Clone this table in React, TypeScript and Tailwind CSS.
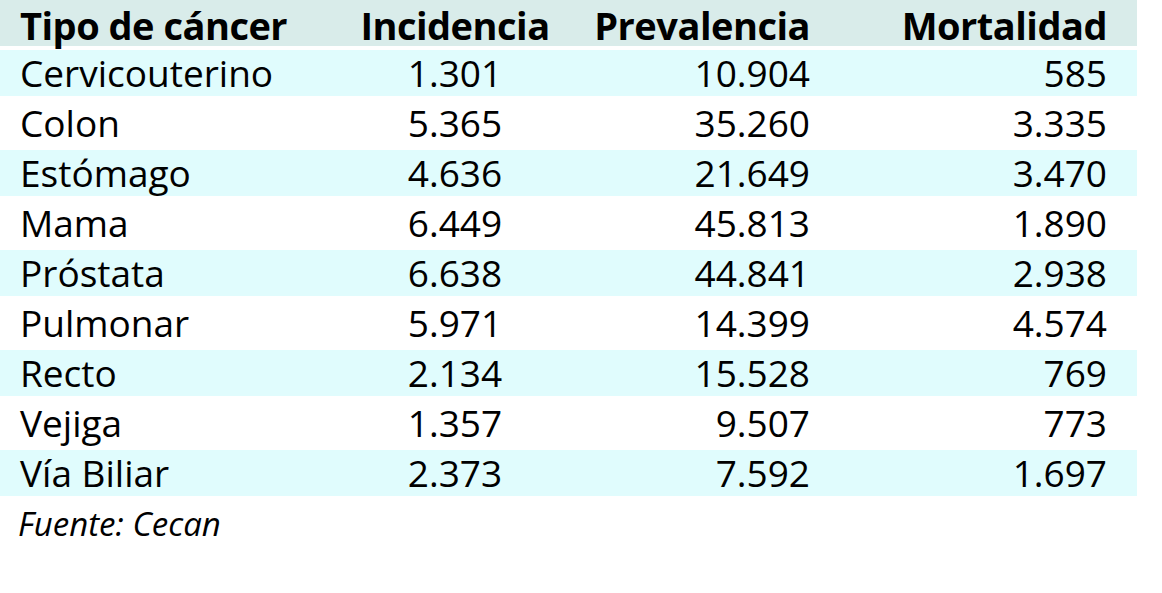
import React from "react";

const rows = [
  { tipo: "Cervicouterino", incidencia: "1.301", prevalencia: "10.904", mortalidad: "585" },
  { tipo: "Colon", incidencia: "5.365", prevalencia: "35.260", mortalidad: "3.335" },
  { tipo: "Estómago", incidencia: "4.636", prevalencia: "21.649", mortalidad: "3.470" },
  { tipo: "Mama", incidencia: "6.449", prevalencia: "45.813", mortalidad: "1.890" },
  { tipo: "Próstata", incidencia: "6.638", prevalencia: "44.841", mortalidad: "2.938" },
  { tipo: "Pulmonar", incidencia: "5.971", prevalencia: "14.399", mortalidad: "4.574" },
  { tipo: "Recto", incidencia: "2.134", prevalencia: "15.528", mortalidad: "769" },
  { tipo: "Vejiga", incidencia: "1.357", prevalencia: "9.507", mortalidad: "773" },
  { tipo: "Vía Biliar", incidencia: "2.373", prevalencia: "7.592", mortalidad: "1.697" },
];

const cols = "grid grid-cols-[320px_230px_240px_297px] items-center pl-[20px] pr-[30px]";

const App = () => {
  return (
    <div className="w-[1162px] h-[593px] bg-white text-black font-['Open_Sans',sans-serif]">
      <div className="w-[1137px] flex flex-col gap-1">
        {/* Header */}
        <div className={`${cols} h-[46px] bg-[#d9ecea] font-bold text-[38px] tracking-[-0.5px] leading-[46px]`}>
          <div className="pt-[2px]">Tipo de cáncer</div>
          <div className="pt-[2px] text-center">Incidencia</div>
          <div className="pt-[2px] text-right">Prevalencia</div>
          <div className="pt-[2px] text-right">Mortalidad</div>
        </div>

        {rows.map((row, index) => (
          <div
            key={row.tipo}
            className={`${cols} h-[46px] text-[37px] leading-[46px] ${
              index % 2 === 0 ? "bg-[#e0fcfd]" : "bg-white"
            }`}
          >
            <div>{row.tipo}</div>
            <div className="text-center">{row.incidencia}</div>
            <div className="text-right">{row.prevalencia}</div>
            <div className="text-right">{row.mortalidad}</div>
          </div>
        ))}
      </div>

      <p className="pl-[18px] mt-[8px] italic text-[33px] leading-[40px]">Fuente: Cecan</p>
    </div>
  );
};

export default App;
